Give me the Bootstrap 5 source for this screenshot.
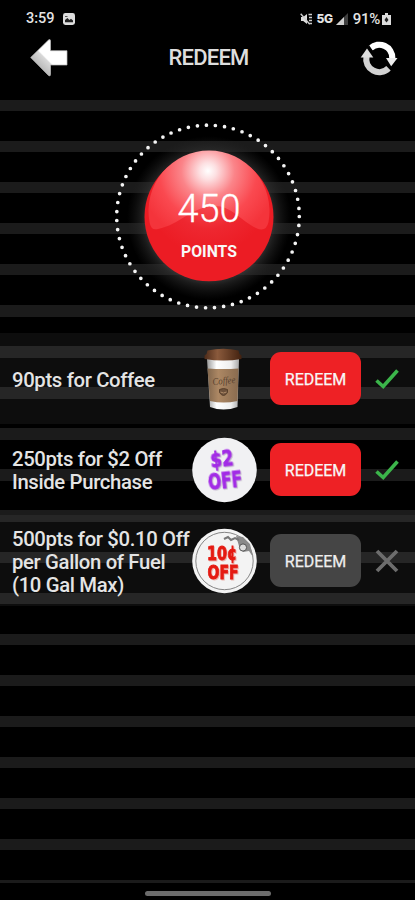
<!DOCTYPE html>
<html lang="en">
<head>
<meta charset="utf-8">
<meta name="viewport" content="width=device-width, initial-scale=1">
<title>Redeem</title>
<link href="https://cdn.jsdelivr.net/npm/bootstrap@5.3.0/dist/css/bootstrap.min.css" rel="stylesheet">
<style>
body{font-family:Roboto,sans-serif;background:#000;color:#e4e4e4}
.screen{height:900px;width:415px}
.status{height:36px;padding:2px 24px 0 26px;font-size:14.5px;font-weight:500;line-height:34px}
.status-net{font-family:Inter,sans-serif;font-weight:800;font-size:12px;letter-spacing:-.3px;margin:0 3px 0 4px}
.status-pct{font-size:15px;letter-spacing:-.3px;margin:0 2px 0 5px}
.titlebar{height:64px;padding:0 17px 20px 29px}
.titlebar h1{font-size:22px;font-weight:500;color:#dedede;line-height:44px;letter-spacing:-.8px;margin-right:12px}
.stripes{height:783px;background:repeating-linear-gradient(180deg,#1b1b1b 0,#1b1b1b 11.3px,#000 11.3px,#000 41.05px)}
.hero{height:233px;padding-top:22px}
.reward{height:91px;padding-left:12px}
.reward.tint{background:rgba(255,255,255,.05)}
.reward-name{width:180px;font-size:20.3px;font-weight:500;line-height:23px;letter-spacing:-.34px;white-space:nowrap;padding-top:3px}
.art{width:66px;height:70px}
.btn-redeem{width:91px;height:53px;border-radius:11px;background:#ee2125;color:#f8f8f8;font-size:16px;font-weight:400;letter-spacing:-.05px;-webkit-text-stroke:.25px currentColor;padding:2px 0 0;border:0;margin-left:12px}
.btn-redeem:disabled{background:#454545;color:#eee;opacity:1}
.state{margin-left:14px}
.burst{font-family:"DejaVu Sans",sans-serif;font-weight:700;stroke-width:.9;stroke-linejoin:miter}
.purple{fill:#a22be6;stroke:#a22be6;filter:drop-shadow(1px 1px 0 #c4bdca)}
.scarlet{fill:#e51a12;stroke:#e51a12;filter:drop-shadow(1px 1px 0 #ebb4ae)}
.homebar{width:126px;height:5px;border-radius:3px;background:#6c6c6c}
</style>
<script src="https://cdn.jsdelivr.net/npm/bootstrap@5.3.0/dist/js/bootstrap.bundle.min.js"></script>
</head>
<body>
<div class="screen d-flex flex-column overflow-hidden">
  <div class="status d-flex align-items-center">
    <span>3:59</span>
    <svg class="ms-2" width="12" height="12" viewBox="0 0 12 12"><rect width="12" height="12" rx="2.4" fill="#ddd"/><path d="M2 9.2V7l2.400-2 2 2L8 5.800 10 7.600v1.600z" fill="#222"/><path d="M2 3.500h2.500" stroke="#555"/></svg>
    <div class="ms-auto d-flex align-items-center">
      <svg width="13" height="12" viewBox="0 0 13 12"><path d="M1 4h2.200L7 1v10L3.200 8H1z" fill="#ddd"/><path d="M.7.7l9 10.600M8.500 1.500H12M9 4.500h3M9 7.500h3M9.500 10.500h2.500" stroke="#ccc" stroke-width="1.400"/></svg>
      <span class="status-net">5G</span>
      <svg width="12" height="12" viewBox="0 0 12 12"><path d="M0 12L12 0v12z" fill="#3f3f3f"/><path d="M0 12l8-8v8z" fill="#d0d0d0"/></svg>
      <span class="status-pct">91%</span>
      <svg width="9" height="12" viewBox="0 0 9 12"><path d="M3 0h3v2h3v10H0V2h3z" fill="#ddd"/><path d="M4.500 4l2 3-2 2.500-2-2.500z" fill="#222"/></svg>
    </div>
  </div>
  <div class="titlebar d-flex align-items-center justify-content-between">
    <svg width="40" height="40" viewBox="0 0 40 40"><defs><linearGradient id="arrowFill" x1=".1" y1=".8" x2=".7" y2=".2"><stop offset="0" stop-color="#aaa"/><stop offset=".48" stop-color="#d8d8d8"/><stop offset=".52" stop-color="#fff"/></linearGradient></defs><path d="M1.700 19.500L19.500 2q2-1.200 2 1V12.700H38V27H21.500v9.500q0 2.300-2 1z" fill="url(#arrowFill)" stroke="#bbb" stroke-width=".7"/></svg>
    <h1 class="mb-0 mt-0">REDEEM</h1>
    <svg width="38" height="36" viewBox="0 0 38 36"><g fill="none" stroke-width="6.200"><path d="M10.500 8.200A13 13 0 0 1 32.300 18" stroke="#fff"/><path d="M28.500 28.200A13 13 0 0 1 6.500 16.500" stroke="#d2d2d2"/></g><path d="M26 18h11.500l-6.300 8.200z" fill="#eee"/><path d="M.7 17.500L7 8.500l6.300 9z" fill="#ddd"/><path d="M8.400 5.300l4.600 7" stroke="#000" stroke-width="1.500"/></svg>
  </div>
  <main class="stripes flex-shrink-0">
    <section class="hero d-flex justify-content-center">
      <svg width="192" height="192" viewBox="0 0 192 192">
        <defs>
          <radialGradient id="halo"><stop offset=".7" stop-color="#555" stop-opacity=".85"/><stop offset=".82" stop-color="#333" stop-opacity=".55"/><stop offset="1" stop-color="#222" stop-opacity="0"/></radialGradient>
          <radialGradient id="gloss" gradientUnits="userSpaceOnUse" cx="96" cy="49" r="70"><stop offset="0" stop-color="#fff"/><stop offset=".12" stop-color="#fde0e2"/><stop offset=".38" stop-color="#fb8489"/><stop offset=".7" stop-color="#fa4950"/><stop offset="1" stop-color="#f4343b"/></radialGradient>
          <radialGradient id="lower" gradientUnits="userSpaceOnUse" cx="96" cy="70" r="62"><stop offset="0" stop-color="#fa5a60"/><stop offset=".6" stop-color="#ee2730"/><stop offset="1" stop-color="#ec1c24"/></radialGradient>
        </defs>
        <circle cx="97" cy="96" r="82" fill="url(#halo)"/>
        <circle cx="96" cy="94.500" r="91.300" fill="none" stroke="#f4f4f4" stroke-width="3.700" stroke-linecap="round" stroke-dasharray="0 9.105"/>
        <circle cx="97" cy="94.800" r="64.500" fill="#ec1c24"/>
        <circle cx="97" cy="94.800" r="63.500" fill="url(#lower)"/>
        <path d="M37.500 100A60.500 60.500 0 1 1 156.500 100Q154 111 144 106C128 98 119 84 103 84C81 84 67 103 46 107Q39 109 37.500 100Z" fill="url(#gloss)"/>
        <text x="97" y="99.500" text-anchor="middle" textLength="63" lengthAdjust="spacingAndGlyphs" font-size="38" font-weight="300" fill="#fff" stroke="#fff" stroke-width=".35">450</text>
        <text x="97" y="134.500" text-anchor="middle" textLength="56" lengthAdjust="spacingAndGlyphs" font-size="17" font-weight="700" fill="#f8f8f8">POINTS</text>
      </svg>
    </section>
    <section class="reward tint d-flex align-items-center">
      <div class="reward-name">90pts for Coffee</div>
      <svg class="art" viewBox="0 0 66 70">
        <defs>
          <linearGradient id="cup"><stop offset="0" stop-color="#999"/><stop offset=".3" stop-color="#fff"/><stop offset=".75" stop-color="#eee"/><stop offset="1" stop-color="#aaa"/></linearGradient>
          <linearGradient id="sleeve"><stop offset="0" stop-color="#80664d"/><stop offset=".35" stop-color="#ad8864"/><stop offset="1" stop-color="#896b4f"/></linearGradient>
          <linearGradient id="lid"><stop offset="0" stop-color="#4d2b19"/><stop offset=".35" stop-color="#8a5a3c"/><stop offset="1" stop-color="#42210f"/></linearGradient>
        </defs>
        <g transform="translate(-1.500 2)">
        <path d="M16.500 13h32l-1.500 48q-14 5-27.500 0z" fill="url(#cup)"/>
        <path d="M17 22.500q16 1 31 0l-1 32.500q-14 3-27.500 0z" fill="url(#sleeve)"/>
        <path d="M17 4.500q16-3.500 31 0l1 3.500 2 1.500v3.500q-18 3-37 0v-3.500l2-1.500z" fill="url(#lid)"/>
        <text x="22" y="38" font-size="10" font-style="italic" textLength="23" lengthAdjust="spacingAndGlyphs" fill="#594330" transform="rotate(-5 33 36)" font-family="Liberation Serif,serif">Coffee</text>
        <path d="M29 43.500q4-2 8 0v3q-4 6-8 0z" fill="#6d513b" stroke="#59402b"/><path d="M30 46q3 2 6 0" stroke="#ae8a68" fill="none"/>
        </g>
      </svg>
      <button class="btn btn-redeem" type="button">REDEEM</button>
      <svg class="state" width="24" height="22" viewBox="0 0 24 22"><path d="M1.500 12.500l6.700 6L22.500 2.500" fill="none" stroke="#3bb54a" stroke-width="3.600"/></svg>
    </section>
    <section class="reward d-flex align-items-center">
      <div class="reward-name">250pts for $2 Off<br>Inside Purchase</div>
      <svg class="art" viewBox="0 0 66 70">
        <circle cx="32.500" cy="35" r="32.300" fill="#f1f1f3"/>
        <g class="burst purple" transform="rotate(-6 33 35)"><text x="19.500" y="31.500" font-size="21" textLength="23" lengthAdjust="spacingAndGlyphs">$2</text><text x="15" y="53.500" font-size="22" textLength="34" lengthAdjust="spacingAndGlyphs">OFF</text></g>
      </svg>
      <button class="btn btn-redeem" type="button">REDEEM</button>
      <svg class="state" width="24" height="22" viewBox="0 0 24 22"><path d="M1.500 12.500l6.700 6L22.500 2.500" fill="none" stroke="#3bb54a" stroke-width="3.600"/></svg>
    </section>
    <section class="reward tint d-flex align-items-center">
      <div class="reward-name">500pts for $0.10 Off<br>per Gallon of Fuel<br>(10 Gal Max)</div>
      <svg class="art" viewBox="0 0 66 70">
        <circle cx="32.500" cy="35" r="32.300" fill="#f3f3f3"/>
        <circle cx="32.500" cy="35" r="28.700" fill="none" stroke="#777" stroke-width=".9"/>
        <path d="M44 10l7 1 7 7 3 13-4-6-6 1-4-6z" fill="#8a8a8a"/><circle cx="51" cy="21.500" r="3.600" fill="#ddd" stroke="#555"/><path d="M32 13l4-2 3 3 4-2 4 2" stroke="#777" stroke-width="2" fill="none"/>
        <g class="burst scarlet"><text x="15" y="34" font-size="19" textLength="30" lengthAdjust="spacingAndGlyphs">10¢</text><text x="15.500" y="52.500" font-size="19.500" textLength="31" lengthAdjust="spacingAndGlyphs">OFF</text></g>
      </svg>
      <button class="btn btn-redeem" type="button" disabled>REDEEM</button>
      <svg class="state" width="24" height="24" viewBox="0 0 24 24"><path d="M2 2l20 20M22 2L2 22" stroke="#6d6d6d" stroke-width="3.800"/></svg>
    </section>
  </main>
  <footer class="flex-grow-1 d-flex justify-content-center pt-2"><div class="homebar"></div></footer>
</div>
</body>
</html>
